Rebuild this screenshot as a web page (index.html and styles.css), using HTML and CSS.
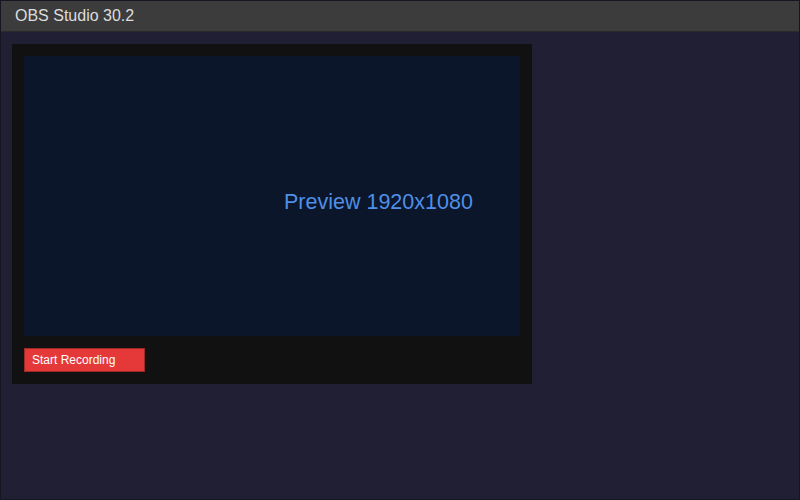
FILE: index.html
```html
<!DOCTYPE html>
<html>
<head>
<meta charset="utf-8">
<link rel="stylesheet" href="styles.css">
</head>
<body>
<div class="window">
  <div class="titlebar">OBS Studio 30.2</div>
  <div class="main">
    <div class="panel">
      <div class="preview"><span class="preview-label">Preview 1920x1080</span></div>
      <div class="controls">
        <button class="record">Start Recording</button>
      </div>
    </div>
  </div>
</div>
</body>
</html>
```
FILE: styles.css
```css
html, body {
  margin: 0;
  padding: 0;
  width: 800px;
  height: 500px;
  overflow: hidden;
}
body {
  font-family: "Liberation Sans", Arial, sans-serif;
  background: #201f33;
}
.window {
  box-sizing: border-box;
  width: 800px;
  height: 500px;
  border: 1px solid #161622;
  display: flex;
  flex-direction: column;
  background: #201f33;
}
.titlebar {
  height: 30px;
  background: #3c3c3c;
  border-bottom: 1px solid #2a2a2a;
  color: #dcdcdc;
  font-size: 16px;
  line-height: 30px;
  padding-left: 14px;
}
.main {
  flex: 1;
  padding: 12px 11px;
}
.panel {
  box-sizing: border-box;
  width: 520px;
  height: 340px;
  background: #111111;
  padding: 12px;
  display: flex;
  flex-direction: column;
  gap: 12px;
}
.preview {
  height: 280px;
  background: #0b162a;
  display: flex;
  align-items: center;
  padding-left: 260px;
  padding-top: 13px;
  box-sizing: border-box;
}
.preview-label {
  color: #4f8fe8;
  font-size: 21.5px;
}
.controls {
  display: flex;
}
.record {
  box-sizing: border-box;
  width: 121px;
  height: 24px;
  background: #e53939;
  border: 1px solid #9a2a2a;
  color: #ffffff;
  font-family: "Liberation Sans", Arial, sans-serif;
  font-size: 12px;
  text-align: left;
  padding: 0 0 0 7px;
  margin: 0;
}
```
